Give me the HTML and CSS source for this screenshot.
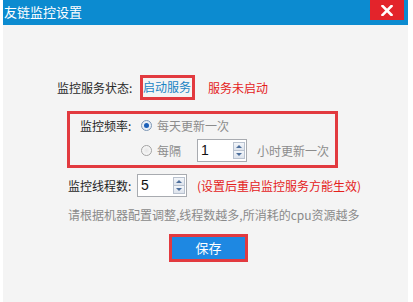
FILE: index.html
```html
<!DOCTYPE html>
<html lang="zh-CN">
<head>
<meta charset="utf-8">
<title>友链监控设置</title>
<link rel="stylesheet" href="styles.css">
</head>
<body>
<div class="win">
  <div class="titlebar">
    <span class="title">友链监控设置</span>
    <span class="close"><svg width="12" height="11" viewBox="0 0 12 11"><path d="M1.5 1 L10.5 10 M10.5 1 L1.5 10" stroke="#fff" stroke-width="2.6" stroke-linecap="square" fill="none"/></svg></span>
  </div>
  <div class="content">
    <div class="row status">
      <span class="label label-status">监控服务状态:</span>
      <span class="hl start">启动服务</span>
      <span class="warn">服务未启动</span>
    </div>
    <div class="freq">
      <div class="frow frow1">
        <span class="flabel">监控频率:</span>
        <span class="radio on"></span>
        <span class="muted">每天更新一次</span>
      </div>
      <div class="frow frow2">
        <span class="flabel"></span>
        <span class="radio"></span>
        <span class="muted">每隔</span>
        <span class="spin spin-hours"><span class="val">1</span><span class="arrows"><span class="ab up"></span><span class="ab down"></span></span></span>
        <span class="muted after">小时更新一次</span>
      </div>
    </div>
    <div class="row threads">
      <span class="label label-threads">监控线程数:</span>
      <span class="spin"><span class="val">5</span><span class="arrows"><span class="ab up"></span><span class="ab down"></span></span></span>
      <span class="warn note">(设置后重启监控服务方能生效)</span>
    </div>
    <p class="hint">请根据机器配置调整,线程数越多,所消耗的cpu资源越多</p>
    <div class="save-wrap"><span class="save">保存</span></div>
  </div>
</div>
</body>
</html>
```
FILE: styles.css
```css
html, body {
  margin: 0;
  padding: 0;
  background: #ffffff;
}
body {
  font-family: "Noto Sans CJK SC", "Noto Sans", sans-serif;
  font-size: 12px;
  color: #2a2a2a;
}
.win {
  margin-left: 3px;
  width: 405px;
  height: 302px;
  background: #f4f4f4;
}
.titlebar {
  height: 25px;
  background: #0c8bd0;
  display: flex;
  justify-content: space-between;
  align-items: flex-start;
}
.title {
  color: #ffffff;
  font-size: 13px;
  line-height: 24px;
  padding-left: 1px;
}
.close {
  width: 34px;
  height: 20px;
  margin-right: 4px;
  background: #e3242b;
  display: flex;
  align-items: center;
  justify-content: center;
}
.content {
  padding: 50px 0 0 54px;
}
.row {
  display: flex;
  align-items: center;
}
.status {
  height: 25px;
}
.label-status {
  width: 83px;
  color: #2a2a2a;
}
.hl {
  box-sizing: border-box;
  height: 25px;
  border: 3px solid #e23a3f;
  padding: 0 1px 0 0;
  line-height: 18px;
  color: #1a84c4;
}
.warn {
  color: #e4211b;
}
.status .warn {
  margin-left: 13px;
}
.freq {
  box-sizing: border-box;
  margin: 11px 0 0 10px;
  width: 271px;
  height: 57px;
  border: 3px solid #e23a3f;
  padding-left: 10px;
}
.frow {
  display: flex;
  align-items: center;
}
.frow1 { height: 23px; }
.frow2 { height: 26px; }
.flabel {
  width: 61px;
  color: #1f1f1f;
}
.muted {
  color: #8c8c8c;
}
.radio {
  box-sizing: border-box;
  width: 11px;
  height: 11px;
  border-radius: 50%;
  border: 1px solid #a3a3a3;
  background: radial-gradient(circle, #e6e6e6 0%, #f7f7f7 70%);
  margin-right: 5px;
  display: flex;
  align-items: center;
  justify-content: center;
}
.radio.on {
  border-color: #7f98b5;
  background: #e8eef6;
}
.radio.on::after {
  content: "";
  width: 5px;
  height: 5px;
  border-radius: 50%;
  background: #1a5fb8;
}
.spin {
  box-sizing: border-box;
  width: 50px;
  height: 23px;
  border: 1px solid #a8abb0;
  background: #ffffff;
  display: flex;
  align-items: stretch;
  justify-content: space-between;
}
.spin-hours {
  margin-left: 16px;
}
.val {
  font-family: "Liberation Sans", Arial, sans-serif;
  font-size: 14px;
  color: #111111;
  line-height: 21px;
  padding-left: 3px;
}
.arrows {
  width: 12px;
  margin: 2px 1px 2px 0;
  display: flex;
  flex-direction: column;
}
.ab {
  flex: 1;
  box-sizing: border-box;
  border: 1px solid #b9c2cf;
  background: linear-gradient(#f3f6fa, #dde3ec);
  display: flex;
  align-items: center;
  justify-content: center;
}
.ab.up { border-bottom-width: 0; }
.ab::after {
  content: "";
  width: 0;
  height: 0;
  border-left: 3px solid transparent;
  border-right: 3px solid transparent;
}
.ab.up::after { border-bottom: 3px solid #4d6f9c; }
.ab.down::after { border-top: 3px solid #4d6f9c; }
.after {
  margin-left: 10px;
}
.threads {
  margin-top: 6px;
  padding-left: 11px;
  height: 23px;
}
.label-threads {
  width: 69px;
  color: #1f1f1f;
}
.note {
  margin-left: 10px;
}
.hint {
  margin: 9px 0 0 11px;
  line-height: 17px;
  color: #8a8a8a;
}
.save-wrap {
  margin-top: 11px;
  padding-left: 112px;
  display: flex;
}
.save {
  box-sizing: border-box;
  width: 79px;
  height: 28px;
  border: 3px solid #e23a3f;
  background: #1e88e2;
  color: #ffffff;
  font-size: 13px;
  line-height: 21px;
  text-align: center;
}
```
